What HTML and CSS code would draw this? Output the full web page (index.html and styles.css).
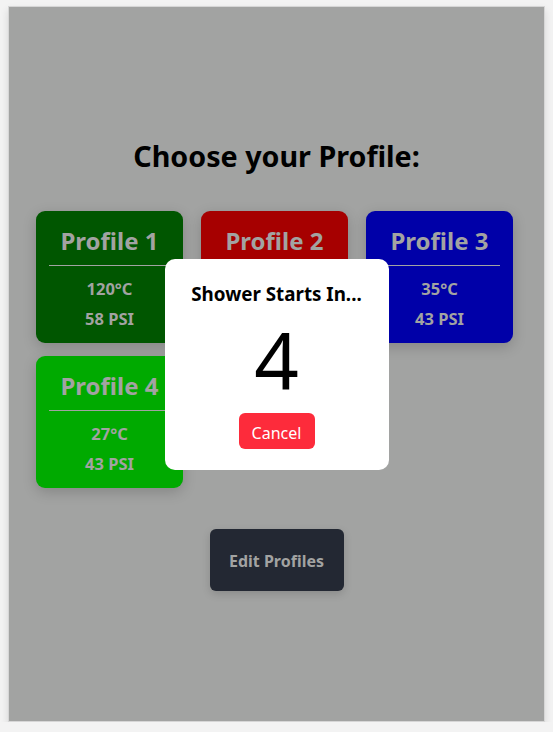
FILE: index.html
```html
<!DOCTYPE html>
<html>
<head>
<meta charset="utf-8">
<link rel="stylesheet" href="styles.css">
</head>
<body>
<div class="screen">
  <h1 class="title">Choose your Profile:</h1>
  <div class="cards">
    <div class="card c1">
      <div class="card-name">Profile 1</div>
      <div class="card-rule"></div>
      <div class="card-val">120°C</div>
      <div class="card-val">58 PSI</div>
    </div>
    <div class="card c2">
      <div class="card-name">Profile 2</div>
      <div class="card-rule"></div>
      <div class="card-val">40°C</div>
      <div class="card-val">50 PSI</div>
    </div>
    <div class="card c3">
      <div class="card-name">Profile 3</div>
      <div class="card-rule"></div>
      <div class="card-val">35°C</div>
      <div class="card-val">43 PSI</div>
    </div>
    <div class="card c4">
      <div class="card-name">Profile 4</div>
      <div class="card-rule"></div>
      <div class="card-val">27°C</div>
      <div class="card-val">43 PSI</div>
    </div>
  </div>
  <div class="actions">
    <button class="edit-btn">Edit Profiles</button>
  </div>
  <div class="modal">
    <div class="modal-title">Shower Starts In...</div>
    <div class="modal-count">4</div>
    <button class="cancel-btn">Cancel</button>
  </div>
</div>
</body>
</html>
```
FILE: styles.css
```css
* { box-sizing: border-box; }
html, body { margin: 0; padding: 0; }
body {
  background: #f3f3f3;
  padding: 6px 8px 0 8px;
  font-family: "Noto Sans", "Open Sans", sans-serif;
}
.screen {
  position: relative;
  width: 537px;
  height: 716px;
  border: 1px solid #d6d6d6;
  background: #a2a3a2;
  box-shadow: 0 4px 8px rgba(0,0,0,0.12);
  padding-top: 132px;
  display: flex;
  flex-direction: column;
}
.title {
  margin: 0;
  font-size: 28.7px;
  line-height: 34px;
  font-weight: 700;
  text-align: center;
  color: #000;
}
.cards {
  margin-top: 38px;
  padding-left: 27px;
  display: grid;
  grid-template-columns: repeat(3, 147px);
  column-gap: 18px;
  row-gap: 13px;
}
.card {
  height: 132px;
  border-radius: 9px;
  padding: 16px 13px 9px;
  color: #a2a3a2;
  text-align: center;
  box-shadow: 0 4px 14px rgba(0,0,0,0.18);
  font-weight: 700;
}
.c1 { background: #005600; }
.c2 { background: #a60000; }
.c3 { background: #0000a8; }
.c4 { background: #00aa00; }
.card-name {
  font-size: 24px;
  line-height: 28px;
}
.card-rule {
  height: 1px;
  background: #a2a3a2;
  margin: 10px 0 8px;
}
.card-val {
  font-size: 16.5px;
  line-height: 30px;
}
.actions {
  margin-top: 41px;
  display: flex;
  justify-content: center;
}
.edit-btn {
  width: 134px;
  height: 62px;
  border: none;
  border-radius: 6px;
  background: #232833;
  color: #a2a3a2;
  font-family: inherit;
  font-size: 16px;
  font-weight: 700;
  padding: 2px 0 0;
  box-shadow: 0 3px 8px rgba(0,0,0,0.15);
}
.modal {
  position: absolute;
  top: 252px;
  left: 50%;
  transform: translateX(-50%);
  width: 224px;
  height: 211px;
  background: #fff;
  border-radius: 10px;
  padding-top: 24px;
  display: flex;
  flex-direction: column;
  align-items: center;
}
.modal-title {
  font-size: 18.8px;
  line-height: 22px;
  font-weight: 700;
  color: #000;
}
.modal-count {
  margin-top: 15px;
  font-size: 78px;
  line-height: 80px;
  color: #000;
}
.cancel-btn {
  margin-top: 13px;
  width: 76px;
  height: 36px;
  border: none;
  border-radius: 6px;
  background: #fd2b3b;
  color: #fff;
  font-family: inherit;
  font-size: 16px;
  padding: 3px 0 0;
}
```
